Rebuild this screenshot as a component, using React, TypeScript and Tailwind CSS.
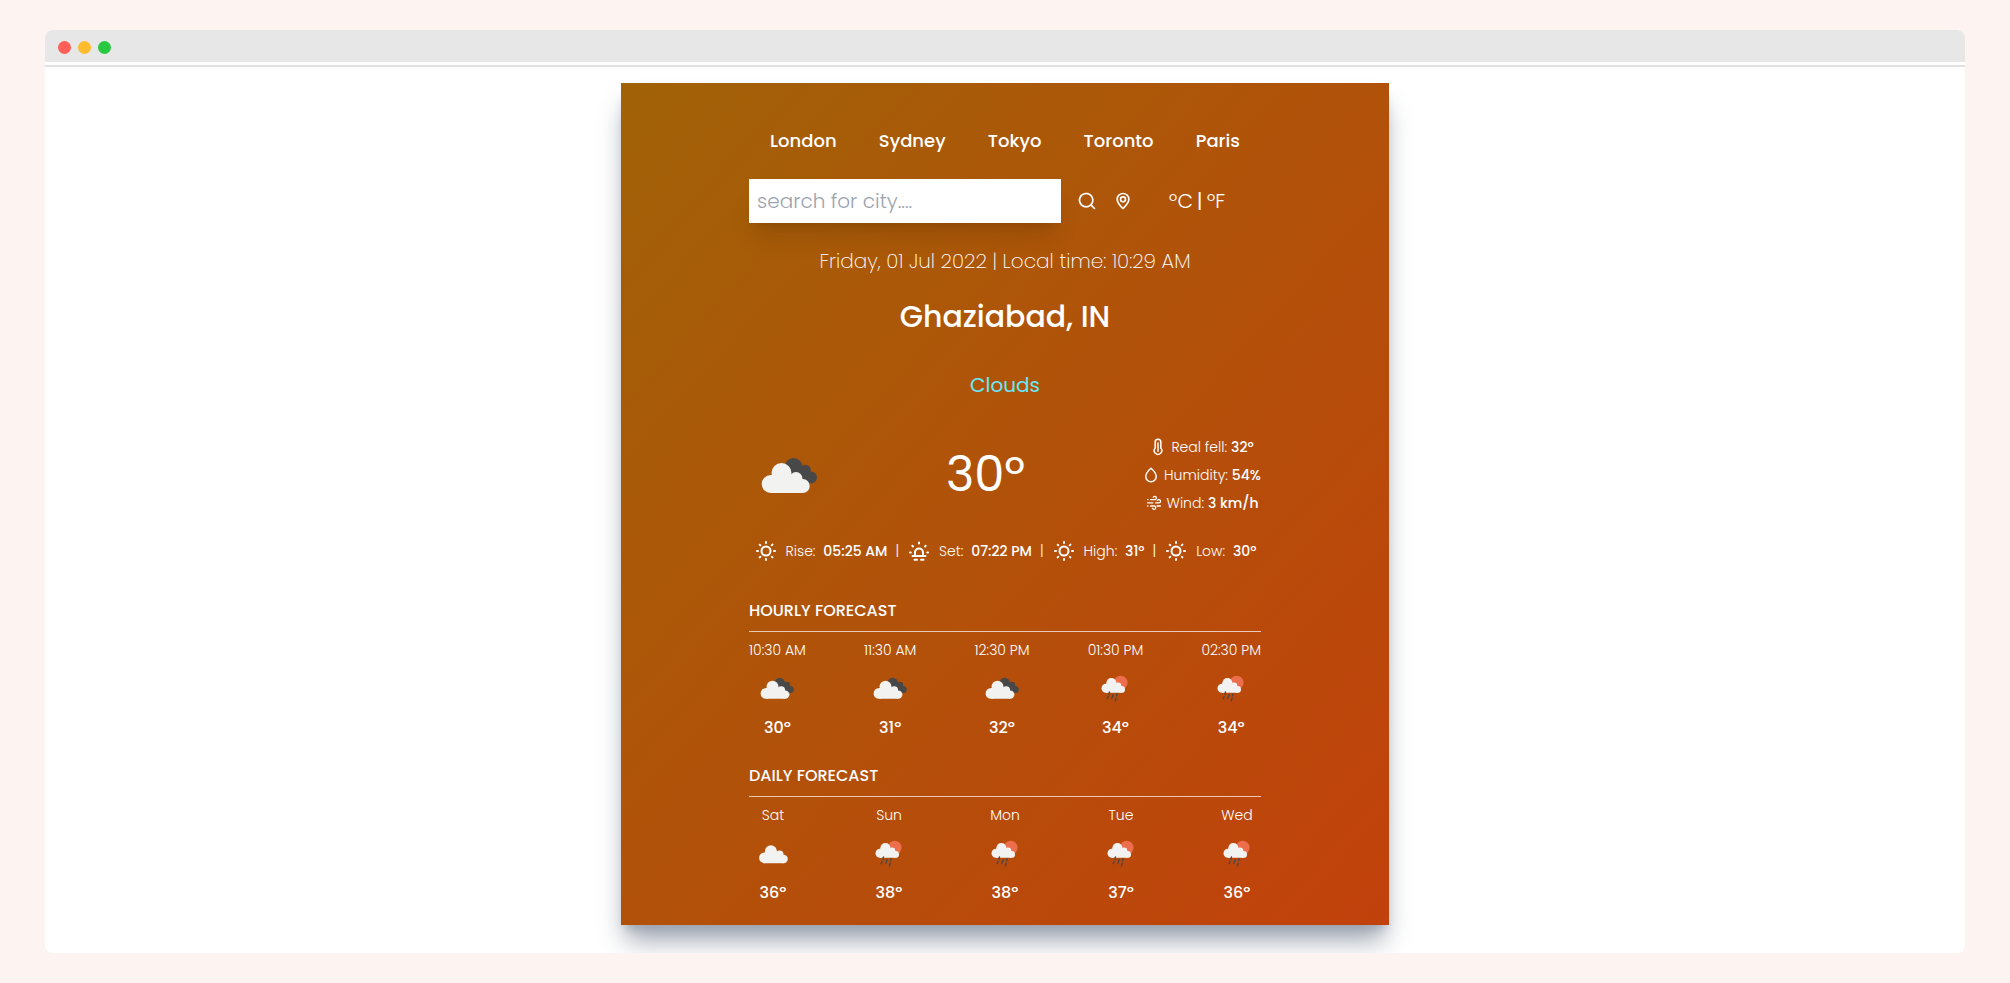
import type { ReactNode } from "react";

type IconProps = { className?: string };

function SearchIcon({ className }: IconProps) {
  return (
    <svg viewBox="0 0 24 24" fill="currentColor" className={className} aria-hidden="true">
      <path d="M21.71,20.29,18,16.61A9,9,0,1,0,16.61,18l3.68,3.68a1,1,0,0,0,1.42,0A1,1,0,0,0,21.71,20.29ZM11,18a7,7,0,1,1,7-7A7,7,0,0,1,11,18Z" />
    </svg>
  );
}

function PinIcon({ className }: IconProps) {
  return (
    <svg viewBox="0 0 24 24" fill="currentColor" className={className} aria-hidden="true">
      <path d="M12,2a8,8,0,0,0-8,7.92c0,5.48,7.05,11.58,7.35,11.84a1,1,0,0,0,1.3,0C13,21.5,20,15.4,20,9.92A8,8,0,0,0,12,2Zm0,17.65c-1.67-1.59-6-6-6-9.73a6,6,0,0,1,12,0C18,13.7,13.67,18.06,12,19.65ZM12,6a4,4,0,1,0,4,4A4,4,0,0,0,12,6Zm0,6a2,2,0,1,1,2-2A2,2,0,0,1,12,12Z" />
    </svg>
  );
}

function SunIcon({ className }: IconProps) {
  return (
    <svg viewBox="0 0 24 24" fill="currentColor" className={className} aria-hidden="true">
      <path d="M5.64,17l-.71.71a1,1,0,0,0,0,1.41,1,1,0,0,0,1.41,0l.71-.71A1,1,0,0,0,5.64,17ZM5,12a1,1,0,0,0-1-1H3a1,1,0,0,0,0,2H4A1,1,0,0,0,5,12Zm7-7a1,1,0,0,0,1-1V3a1,1,0,0,0-2,0V4A1,1,0,0,0,12,5ZM5.64,7.05a1,1,0,0,0,.7.29,1,1,0,0,0,.71-.29,1,1,0,0,0,0-1.41l-.71-.71A1,1,0,0,0,4.93,6.34Zm12,.29a1,1,0,0,0,.7-.29l.71-.71a1,1,0,1,0-1.41-1.41L17,5.64a1,1,0,0,0,0,1.41A1,1,0,0,0,17.66,7.34ZM21,11H20a1,1,0,0,0,0,2h1a1,1,0,0,0,0-2Zm-9,8a1,1,0,0,0-1,1v1a1,1,0,0,0,2,0V20A1,1,0,0,0,12,19ZM18.36,17A1,1,0,0,0,17,18.36l.71.71a1,1,0,0,0,1.41,0,1,1,0,0,0,0-1.41ZM12,6.5A5.5,5.5,0,1,0,17.5,12,5.51,5.51,0,0,0,12,6.5Zm0,9A3.5,3.5,0,1,1,15.5,12,3.5,3.5,0,0,1,12,15.5Z" />
    </svg>
  );
}

function StrokeIcon({ className, children }: { className?: string; children: ReactNode }) {
  return (
    <svg
      viewBox="0 0 24 24"
      fill="none"
      stroke="currentColor"
      strokeWidth="2"
      strokeLinecap="round"
      strokeLinejoin="round"
      className={className}
      aria-hidden="true"
    >
      {children}
    </svg>
  );
}

function SunsetIcon({ className }: IconProps) {
  return (
    <StrokeIcon className={className}>
      <path d="M12 3.5v1M5.3 6.8l.7.7M18.7 6.8l-.7.7M3 13.5h.8M20.2 13.5h.8" />
      <path d="M5.5 17h13M8 17v-3.5a4 4 0 0 1 8 0V17" />
      <path d="M7.5 20.7h2.5M14 20.7h2.5" />
    </StrokeIcon>
  );
}

function ThermometerIcon({ className }: IconProps) {
  return (
    <StrokeIcon className={className}>
      <path d="M8.2 13.5V5.5a3.8 3.8 0 0 1 7.6 0v8a5 5 0 1 1-7.6 0Z" />
      <path d="M12 6.5v11" />
    </StrokeIcon>
  );
}

function DropIcon({ className }: IconProps) {
  return (
    <StrokeIcon className={className}>
      <path d="M12 3C8 6.400 5 10.300 5 14a7 7 0 0 0 14 0c0-3.700-3-7.600-7-11Z" />
    </StrokeIcon>
  );
}

function WindIcon({ className }: IconProps) {
  return (
    <svg
      viewBox="0 0 24 24"
      fill="none"
      stroke="currentColor"
      strokeWidth="1.7"
      strokeLinecap="round"
      className={className}
      aria-hidden="true"
    >
      <path d="M3.5 7.5h.5M7.5 7.5H13a2.200 2.200 0 1 0-2-3" />
      <path d="M3.5 11.800h7M14 11.800h4.500a2.200 2.200 0 1 0-2-3" />
      <path d="M3.5 16h.5M7.500 16h4.500a2.200 2.200 0 1 1-2 3M16 16h4.500" />
    </svg>
  );
}

function CloudShape() {
  return (
    <g fill="#f2f2f0">
      <circle cx="32.5" cy="38" r="10" />
      <circle cx="47" cy="43.5" r="6.5" />
      <circle cx="21.7" cy="49" r="9" />
      <circle cx="53.7" cy="51" r="7" />
      <path d="M21.7 40h24l8 8v10h-32Z" />
    </g>
  );
}

function ScatteredClouds({ className }: IconProps) {
  return (
    <svg viewBox="0 0 80 80" className={className} role="img" aria-label="Scattered clouds">
      <g fill="#484848">
        <circle cx="44.5" cy="32" r="9" />
        <circle cx="56.5" cy="35" r="5.3" />
        <circle cx="62" cy="42.5" r="6" />
        <path d="M41 32h12l8 6-1 9-14-4Z" />
      </g>
      <CloudShape />
    </svg>
  );
}

function SingleCloud({ className }: IconProps) {
  return (
    <svg viewBox="0 0 80 80" className={className} role="img" aria-label="Cloudy">
      <g transform="translate(4 -1)">
        <CloudShape />
      </g>
    </svg>
  );
}

function SunShower({ className }: IconProps) {
  return (
    <svg viewBox="0 0 80 80" className={className} role="img" aria-label="Rain">
      <circle cx="49.5" cy="31" r="11.5" fill="#ec6e4c" />
      <g fill="#f2f2f2">
        <circle cx="34" cy="32" r="8.5" />
        <circle cx="45" cy="36.5" r="5.5" />
        <circle cx="25" cy="40.5" r="7.5" />
        <circle cx="51" cy="42.3" r="5.7" />
        <path d="M25 33h20l6 6v9H25Z" />
      </g>
      <path
        d="M30.8 46.5l-.8 4M28.600 54l-1.600 4M37 51l-2.500 6.500M43.500 49.500l-1 3.500M42 57l-1.700 4.500"
        fill="none"
        stroke="#484848"
        strokeWidth="2.2"
        strokeLinecap="round"
      />
    </svg>
  );
}

const pictures = { clouds: ScatteredClouds, cloud: SingleCloud, rain: SunShower };

type Slot = { label: string; picture: keyof typeof pictures; temp: string };

const cities = ["London", "Sydney", "Tokyo", "Toronto", "Paris"];

const hourly: Slot[] = [
  { label: "10:30 AM", picture: "clouds", temp: "30º" },
  { label: "11:30 AM", picture: "clouds", temp: "31º" },
  { label: "12:30 PM", picture: "clouds", temp: "32º" },
  { label: "01:30 PM", picture: "rain", temp: "34º" },
  { label: "02:30 PM", picture: "rain", temp: "34º" },
];

const daily: Slot[] = [
  { label: "Sat", picture: "cloud", temp: "36º" },
  { label: "Sun", picture: "rain", temp: "38º" },
  { label: "Mon", picture: "rain", temp: "38º" },
  { label: "Tue", picture: "rain", temp: "37º" },
  { label: "Wed", picture: "rain", temp: "36º" },
];

function Detail({ icon, label, value }: { icon: ReactNode; label: string; value: string }) {
  return (
    <div className="flex items-center justify-center text-sm font-light">
      {icon}
      {label}:<span className="ml-1 font-medium">{value}</span>
    </div>
  );
}

function SunFact({ icon, label, value }: { icon: ReactNode; label: string; value: string }) {
  return (
    <div className="flex items-center gap-2">
      {icon}
      <p className="font-light">
        {label}: <span className="ml-1 font-medium">{value}</span>
      </p>
    </div>
  );
}

function Forecast({ title, slots }: { title: string; slots: Slot[] }) {
  return (
    <section className="mt-6">
      <h2 className="text-base font-medium uppercase">{title}</h2>
      <hr className="my-2 border-white/70" />
      <div className="flex items-center justify-between">
        {slots.map((slot) => {
          const Picture = pictures[slot.picture];
          return (
            <div key={slot.label} className="flex flex-col items-center justify-center">
              <p className="text-sm font-light">{slot.label}</p>
              <Picture className="my-1 size-12" />
              <p className="font-medium">{slot.temp}</p>
            </div>
          );
        })}
      </div>
    </section>
  );
}

export default function App() {
  return (
    <div className="min-h-screen bg-[#fdf3f1] px-[45px] py-[30px] font-['Poppins','Inter',sans-serif]">
      <div className="overflow-hidden rounded-lg bg-white">
        <div className="flex h-8 items-center gap-[7px] bg-[#e7e7e7] pl-[13px] pt-[2px]">
          <span className="size-[13px] rounded-full bg-[#ff5f57]" />
          <span className="size-[13px] rounded-full bg-[#febc2e]" />
          <span className="size-[13px] rounded-full bg-[#28c840]" />
        </div>
        <div className="mt-[3px] h-[2px] bg-[#e1e1e1]" />

        <main className="mx-auto mt-4 mb-7 max-w-3xl bg-[linear-gradient(to_bottom_right,#a16207,#c2410c)] px-32 py-5 text-white shadow-xl shadow-[#9ca3af]">
          <nav className="my-6 flex items-center justify-around">
            {cities.map((city) => (
              <button key={city} type="button" className="text-lg font-medium">
                {city}
              </button>
            ))}
          </nav>

          <div className="my-6 flex">
            <form className="flex w-3/4 items-center gap-4">
              <input
                type="text"
                aria-label="City"
                placeholder="search for city...."
                className="h-11 min-w-0 flex-1 bg-white p-2 text-xl font-light text-gray-700 shadow-xl placeholder:text-[#9ca3af]"
              />
              <button type="button" aria-label="Search">
                <SearchIcon className="size-5" />
              </button>
              <button type="button" aria-label="Use my location">
                <PinIcon className="size-5" />
              </button>
            </form>
            <div className="flex w-1/4 items-center justify-center text-xl">
              <button type="button" className="font-light">ºC</button>
              <span className="mx-1">|</span>
              <button type="button" className="font-light">ºF</button>
            </div>
          </div>

          <p className="my-6 text-center font-['Poppins_ExtraLight','Poppins','Inter',sans-serif] text-xl leading-7 font-light">
            Friday, 01 Jul 2022 | Local time: 10:29 AM
          </p>
          <h1 className="my-3 text-center text-3xl leading-9 font-medium">Ghaziabad, IN</h1>

          <p className="py-6 text-center text-xl leading-7 text-[#67e8f9]">Clouds</p>

          <div className="flex items-center justify-between py-3">
            <ScatteredClouds className="size-20" />
            <p className="text-5xl">30º</p>
            <div className="flex flex-col gap-2">
              <Detail icon={<ThermometerIcon className="mr-1 size-[18px]" />} label="Real fell" value="32º" />
              <Detail icon={<DropIcon className="mr-1 size-[18px]" />} label="Humidity" value="54%" />
              <Detail icon={<WindIcon className="mr-1 size-[18px]" />} label="Wind" value="3 km/h" />
            </div>
          </div>

          <div className="flex items-center justify-center gap-2 py-3 text-sm">
            <SunFact icon={<SunIcon className="size-6" />} label="Rise" value="05:25 AM" />
            <span className="font-light">|</span>
            <SunFact icon={<SunsetIcon className="size-6" />} label="Set" value="07:22 PM" />
            <span className="font-light">|</span>
            <SunFact icon={<SunIcon className="size-6" />} label="High" value="31º" />
            <span className="font-light">|</span>
            <SunFact icon={<SunIcon className="size-6" />} label="Low" value="30º" />
          </div>

          <Forecast title="Hourly forecast" slots={hourly} />
          <Forecast title="Daily forecast" slots={daily} />
        </main>
      </div>
    </div>
  );
}
